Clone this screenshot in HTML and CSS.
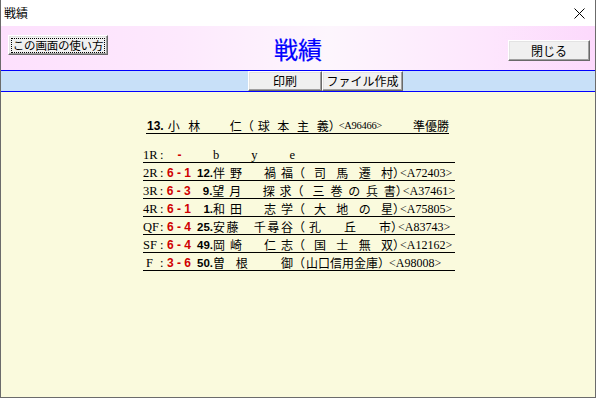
FILE: index.html
```html
<!DOCTYPE html>
<html lang="ja">
<head>
  <meta charset="UTF-8">
  <title>戦績</title>
  <link rel="stylesheet" href="styles.css">
</head>
<body>
  <div class="win">
    <div class="titlebar">
      <span class="caption">戦績</span>
      <svg class="x" width="11" height="11" viewBox="0 0 11 11"><path d="M0.5 0.5 L10.5 10.5 M10.5 0.5 L0.5 10.5" stroke="#000" stroke-width="1"/></svg>
    </div>

    <div class="head">
      <button class="btn help"><span class="focus">この画面の使い方</span></button>
      <h1 class="title">戦績</h1>
      <button class="btn close">閉じる</button>
    </div>

    <div class="tools">
      <button class="btn tool print">印刷</button>
      <button class="btn tool file">ファイル作成</button>
    </div>

    <div class="content">
      <div class="sheet">
        <div class="row top">
          <span class="num">13.</span>
          <span class="name nm-top"><i>小</i><i>林</i><i></i><i>仁</i></span>
          <span class="lp">（</span>
          <span class="in in-top"><i>球</i><i>本</i><i>主</i><i>義</i></span>
          <span class="rp">）</span>
          <span class="id id-top">&lt;A96466&gt;</span>
          <span class="rank">準優勝</span>
        </div>

        <div class="row">
          <span class="lab">1R</span><span class="colon">:</span>
          <span class="score dash">-</span>
          <span class="bye"><i>b</i><i>y</i><i>e</i></span>
        </div>

        <div class="row">
          <span class="lab">2R</span><span class="colon">:</span>
          <span class="score">6 - 1</span>
          <span class="num">12.</span>
          <span class="name"><i>伴</i><i>野</i><i></i><i>禍</i><i>福</i></span>
          <span class="lp">（</span>
          <span class="in"><i>司</i><i>馬</i><i>遷</i><i>村</i></span>
          <span class="rp">）</span>
          <span class="id">&lt;A72403&gt;</span>
        </div>

        <div class="row">
          <span class="lab">3R</span><span class="colon">:</span>
          <span class="score">6 - 3</span>
          <span class="num">9.</span>
          <span class="name"><i>望</i><i>月</i><i></i><i>探</i><i>求</i></span>
          <span class="lp">（</span>
          <span class="in in-wide"><i>三</i><i>巻</i><i>の</i><i>兵</i><i>書</i></span>
          <span class="rp">）</span>
          <span class="id">&lt;A37461&gt;</span>
        </div>

        <div class="row">
          <span class="lab">4R</span><span class="colon">:</span>
          <span class="score">6 - 1</span>
          <span class="num">1.</span>
          <span class="name"><i>和</i><i>田</i><i></i><i>志</i><i>学</i></span>
          <span class="lp">（</span>
          <span class="in"><i>大</i><i>地</i><i>の</i><i>星</i></span>
          <span class="rp">）</span>
          <span class="id">&lt;A75805&gt;</span>
        </div>

        <div class="row">
          <span class="lab">QF</span><span class="colon">:</span>
          <span class="score">6 - 4</span>
          <span class="num">25.</span>
          <span class="name"><i>安</i><i>藤</i><i></i><i>千</i><i>尋</i><i>谷</i></span>
          <span class="lp">（</span>
          <span class="in in-qf"><i>孔</i><i>丘</i><i>市</i></span>
          <span class="rp">）</span>
          <span class="id">&lt;A83743&gt;</span>
        </div>

        <div class="row">
          <span class="lab">SF</span><span class="colon">:</span>
          <span class="score">6 - 4</span>
          <span class="num">49.</span>
          <span class="name"><i>岡</i><i>崎</i><i></i><i>仁</i><i>志</i></span>
          <span class="lp">（</span>
          <span class="in"><i>国</i><i>士</i><i>無</i><i>双</i></span>
          <span class="rp">）</span>
          <span class="id">&lt;A12162&gt;</span>
        </div>

        <div class="row">
          <span class="lab lab-f">F</span><span class="colon">:</span>
          <span class="score">3 - 6</span>
          <span class="num">50.</span>
          <span class="name"><i>曽</i><i>根</i><i></i><i>御</i></span>
          <span class="lp">（</span>
          <span class="in in-packed">山口信用金庫</span>
          <span class="rp">）</span>
          <span class="id id-f">&lt;A98008&gt;</span>
        </div>
      </div>
    </div>
  </div>
</body>
</html>
```

FILE: styles.css
```css
body {
  margin: 0;
  background: #fff;
  font-family: "Noto Sans CJK JP", sans-serif;
  font-size: 12px;
  color: #000;
}
.win {
  width: 596px;
  height: 398px;
  box-sizing: border-box;
  border-left: 1px solid #6b6b6b;
  border-right: 1px solid #6b6b6b;
  border-bottom: 1px solid #6b6b6b;
  display: flex;
  flex-direction: column;
  overflow: hidden;
}
.titlebar {
  height: 26px;
  background: #fff;
  display: flex;
  align-items: center;
  justify-content: space-between;
  padding: 0 10px 0 3px;
  flex-shrink: 0;
}
.caption {
  font-size: 12px;
  line-height: 14px;
}
.x {
  display: block;
}
.head {
  height: 44px;
  flex-shrink: 0;
  display: grid;
  grid-template-columns: 1fr auto 1fr;
  border-bottom: 1px solid #0000ff;
  background: linear-gradient(to right, #fde0fd 0%, #fde9fd 30%, #fdf6fd 55%, #fde6fd 82%, #fcd9fc 100%);
}
.title {
  margin: 0;
  align-self: center;
  font-size: 24px;
  font-weight: normal;
  line-height: 28px;
  color: #0000ff;
  padding-top: 2px;
  -webkit-text-stroke: 0.2px #0000ff;
}
.btn {
  font-family: "Noto Sans CJK JP", sans-serif;
  font-size: 12px;
  line-height: 14px;
  color: #000;
  background: #f0f0f0;
  border: 1px solid;
  border-color: #ffffff #696969 #696969 #ffffff;
  box-shadow: inset -1px -1px #a0a0a0, inset 1px 1px #e3e3e3;
  padding: 0;
  box-sizing: border-box;
  display: flex;
  align-items: center;
  justify-content: center;
  white-space: nowrap;
}
.help {
  justify-self: start;
  margin: 9px 0 0 7px;
  width: 100px;
  height: 20px;
}
.focus {
  border: 1px dotted #000;
  padding: 0 1px;
  font-size: 11.5px;
  letter-spacing: -0.2px;
  line-height: 13px;
}
.close {
  justify-self: end;
  margin: 14px 5px 0 0;
  width: 82px;
  height: 21px;
}
.tools {
  height: 20px;
  flex-shrink: 0;
  display: flex;
  padding-left: 247px;
  background: #c8e0f8;
  border-bottom: 1px solid #0000ff;
}
.tool {
  height: 20px;
}
.print {
  width: 74px;
}
.file {
  width: 81px;
}
.content {
  flex: 1;
  background: #fafadd;
}
.sheet {
  padding: 24px 0 0 142px;
  display: flex;
  flex-direction: column;
}
.row {
  width: 312px;
  height: 17px;
  border-bottom: 1px solid #000;
  display: flex;
  align-items: flex-end;
  line-height: 14px;
  white-space: pre;
}
.row i {
  font-style: normal;
  display: block;
  min-width: 12px;
}
.top {
  width: 303px;
  margin-left: 3px;
  margin-bottom: 11px;
}
.lab {
  width: 17px;
  font-family: "Liberation Serif", serif;
  font-size: 12.5px;
}
.lab-f {
  padding-left: 3px;
  width: 14px;
}
.colon {
  width: 7px;
  font-family: "Liberation Serif", serif;
  font-size: 12.5px;
}
.score {
  width: 25px;
  font-family: "Liberation Sans", sans-serif;
  font-weight: bold;
  font-size: 12px;
  color: #d00000;
}
.dash {
  text-align: center;
}
.num {
  width: 21px;
  text-align: right;
  font-family: "Liberation Sans", sans-serif;
  font-weight: bold;
  font-size: 11.5px;
}
.top .num {
  width: auto;
  margin-left: 1px;
  font-size: 12px;
}
.name {
  width: 80px;
  display: flex;
  justify-content: space-between;
}
.nm-top {
  width: 74px;
  margin-left: 4px;
}
.lp {
  width: 12px;
}
.in {
  width: 79px;
  margin-left: 9px;
  display: flex;
  justify-content: space-between;
}
.in-wide {
  width: 84px;
}
.in-qf {
  width: 82px;
  margin-left: 4px;
}
.in-top {
  width: 71px;
  margin-left: 4px;
}
.in-packed {
  width: auto;
  margin-left: 1px;
  display: block;
}
.rp {
  width: 6px;
  font-feature-settings: "halt";
}
.id {
  margin-left: 1px;
  font-family: "Liberation Serif", serif;
  font-size: 12px;
}
.id-top {
  margin-left: 4px;
  font-size: 10.5px;
  letter-spacing: -0.3px;
}
.id-f {
  margin-left: 5px;
}
.rank {
  margin-left: auto;
}
.bye {
  width: 82px;
  margin-left: 21px;
  display: flex;
  justify-content: space-between;
  font-family: "Liberation Serif", serif;
  font-size: 12.5px;
}
.bye i {
  min-width: 0;
}
```
